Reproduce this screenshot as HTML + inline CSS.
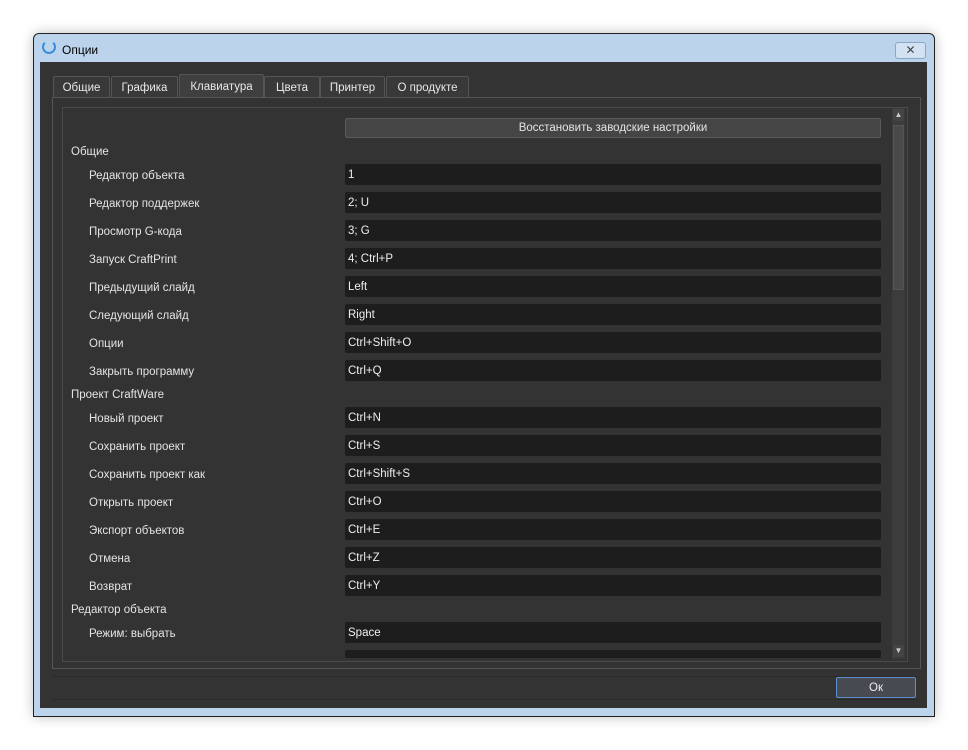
<!DOCTYPE html>
<html><head><meta charset="utf-8"><style>
body{margin:0;width:968px;height:750px;background:#fff;position:relative;overflow:hidden;font-family:"Liberation Sans",sans-serif;font-size:11.5px;color:#e4e4e4}
.a{position:absolute}
.frame{left:33px;top:33px;width:900px;height:682px;background:#bcd3ec;border:1px solid #222;border-radius:6px 6px 0 0;box-shadow:0 0 12px rgba(0,0,0,.25)}
.client{left:40px;top:62px;width:887px;height:646px;background:#333}
.tab{top:76px;height:20px;background:#393939;border:1px solid #555;border-bottom:none;color:#e8e8e8;line-height:22px;text-align:center;border-radius:2px 2px 0 0}
.panel{left:52px;top:97px;width:867px;height:570px;border:1px solid #555;background:#333}
.inner{left:62px;top:107px;width:844px;height:553px;border:1px solid #4a4a4a;background:#333}
.fld{left:345px;width:536px;height:21px;background:#1d1d1d;border-radius:2px;line-height:22px;text-indent:3px;color:#eee}
.lb{left:89px;color:#e4e4e4;margin-top:1px}
.sec{left:71px;margin-top:1px}
</style></head><body>
<div class="a frame"></div>
<div class="a" style="left:42px;top:40px;width:14px;height:14px;border:2px solid #3a8ee0;border-radius:50%;box-sizing:border-box;border-top-color:transparent"></div>
<div class="a" style="left:62px;top:43px;color:#000;font-size:12px">Опции</div>
<div class="a" style="left:895px;top:42px;width:29px;height:15px;border:1px solid #8aa7c8;border-radius:3px;background:#d3e2f3;color:#444;text-align:center;line-height:15px;font-size:12px">✕</div>
<div class="a client"></div>
<div class="a tab" style="left:53px;width:55px">Общие</div>
<div class="a tab" style="left:111px;width:65px">Графика</div>
<div class="a tab" style="left:179px;width:83px;top:74px;height:23px;background:#3f3f3f;line-height:24px">Клавиатура</div>
<div class="a tab" style="left:264px;width:54px">Цвета</div>
<div class="a tab" style="left:320px;width:63px">Принтер</div>
<div class="a tab" style="left:386px;width:81px">О продукте</div>
<div class="a panel"></div>
<div class="a inner"></div>
<div class="a" style="left:892px;top:108px;width:13px;height:551px;background:#3c3c3c"></div>
<div class="a" style="left:893px;top:125px;width:11px;height:165px;background:#4a4a4a;border:1px solid #555;box-sizing:border-box"></div>
<div class="a" style="left:893px;top:109px;width:11px;height:12px;background:#444;color:#ccc;font-size:8px;text-align:center;line-height:12px">▲</div>
<div class="a" style="left:893px;top:645px;width:11px;height:12px;background:#444;color:#ccc;font-size:8px;text-align:center;line-height:12px">▼</div>
<div class="a" style="left:345px;top:118px;width:534px;height:18px;background:#454545;border:1px solid #5a5a5a;border-radius:2px;text-align:center;line-height:19px">Восстановить заводские настройки</div>
<div class="a sec" style="top:145px">Общие</div>
<div class="a lb" style="top:169px">Редактор объекта</div><div class="a fld" style="top:164px">1</div>
<div class="a lb" style="top:197px">Редактор поддержек</div><div class="a fld" style="top:192px">2; U</div>
<div class="a lb" style="top:225px">Просмотр G-кода</div><div class="a fld" style="top:220px">3; G</div>
<div class="a lb" style="top:253px">Запуск CraftPrint</div><div class="a fld" style="top:248px">4; Ctrl+P</div>
<div class="a lb" style="top:281px">Предыдущий слайд</div><div class="a fld" style="top:276px">Left</div>
<div class="a lb" style="top:309px">Следующий слайд</div><div class="a fld" style="top:304px">Right</div>
<div class="a lb" style="top:337px">Опции</div><div class="a fld" style="top:332px">Ctrl+Shift+O</div>
<div class="a lb" style="top:365px">Закрыть программу</div><div class="a fld" style="top:360px">Ctrl+Q</div>
<div class="a sec" style="top:388px">Проект CraftWare</div>
<div class="a lb" style="top:412px">Новый проект</div><div class="a fld" style="top:407px">Ctrl+N</div>
<div class="a lb" style="top:440px">Сохранить проект</div><div class="a fld" style="top:435px">Ctrl+S</div>
<div class="a lb" style="top:468px">Сохранить проект как</div><div class="a fld" style="top:463px">Ctrl+Shift+S</div>
<div class="a lb" style="top:496px">Открыть проект</div><div class="a fld" style="top:491px">Ctrl+O</div>
<div class="a lb" style="top:524px">Экспорт объектов</div><div class="a fld" style="top:519px">Ctrl+E</div>
<div class="a lb" style="top:552px">Отмена</div><div class="a fld" style="top:547px">Ctrl+Z</div>
<div class="a lb" style="top:580px">Возврат</div><div class="a fld" style="top:575px">Ctrl+Y</div>
<div class="a sec" style="top:603px">Редактор объекта</div>
<div class="a lb" style="top:627px">Режим: выбрать</div><div class="a fld" style="top:622px">Space</div>
<div class="a fld" style="top:650px;height:8px"></div>
<div class="a" style="left:52px;top:676px;width:865px;height:22px;border-top:1px solid #2a2a2a;border-bottom:1px solid #2a2a2a"></div>
<div class="a" style="left:836px;top:677px;width:78px;height:19px;background:#474a50;border:1px solid #5d8fd0;border-radius:2px;text-align:center;line-height:20px;color:#eee">Ок</div>
</body></html>
